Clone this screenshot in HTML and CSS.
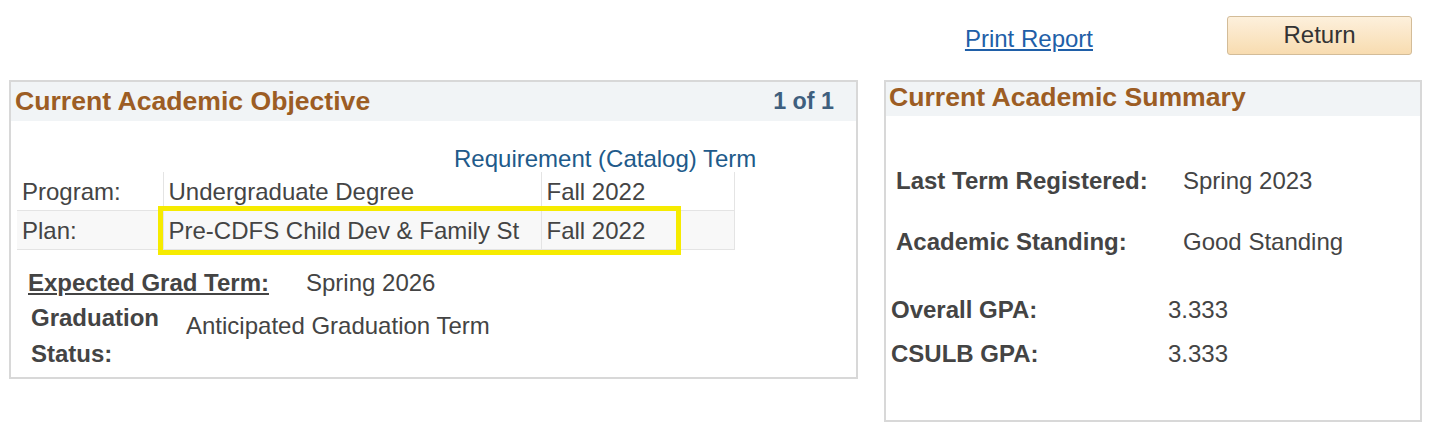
FILE: index.html
```html
<!DOCTYPE html>
<html>
  <head>
    <meta charset="utf-8">
    <title>Academic Progress</title>
    <link rel="stylesheet" href="styles.css">
  </head>
  <body>
    <div class="toolbar">
      <a class="print-link" href="#">Print Report</a>
      <button class="return-button">Return</button>
    </div>
    <div class="container">
      <div class="panel objective">
        <div class="panel-header">
          <h2>Current Academic Objective</h2>
          <span class="count">1 of 1</span>
        </div>
        <div class="req-title">Requirement (Catalog) Term</div>
        <table class="plan-table">
          <tr>
            <td class="col-label">Program:</td>
            <td class="col-name">Undergraduate Degree</td>
            <td class="col-term">Fall 2022</td>
          </tr>
          <tr class="alt">
            <td class="col-label">Plan:</td>
            <td class="col-name">Pre-CDFS Child Dev &amp; Family St</td>
            <td class="col-term">Fall 2022</td>
          </tr>
        </table>
        <div class="highlight"></div>
        <div class="grad-term">
          <span class="grad-label">Expected Grad Term:</span>
          <span class="grad-value">Spring 2026</span>
        </div>
        <div class="grad-status">
          <span class="status-label">Graduation<br>Status:</span>
          <span class="status-value">Anticipated Graduation Term</span>
        </div>
      </div>
      <div class="panel summary">
        <div class="panel-header">
          <h2>Current Academic Summary</h2>
        </div>
        <div class="summary-row first">
          <span class="sum-label">Last Term Registered:</span>
          <span class="sum-value">Spring 2023</span>
        </div>
        <div class="summary-row">
          <span class="sum-label">Academic Standing:</span>
          <span class="sum-value">Good Standing</span>
        </div>
        <div class="gpa-row first">
          <span class="gpa-label">Overall GPA:</span>
          <span class="gpa-value">3.333</span>
        </div>
        <div class="gpa-row">
          <span class="gpa-label">CSULB GPA:</span>
          <span class="gpa-value">3.333</span>
        </div>
      </div>
    </div>
  </body>
</html>
```

FILE: styles.css
```css
* {
  box-sizing: border-box;
}

body {
  font-family: Arial, "Liberation Sans", sans-serif;
  margin: 0;
  padding: 0;
  background-color: #fff;
  color: #444;
  font-size: 24px;
}

.toolbar {
  display: flex;
  justify-content: flex-end;
  align-items: center;
  height: 80px;
  padding: 0 19px 8px 0;
}

.print-link {
  color: #1f5fa8;
  font-size: 24px;
  margin-right: 134px;
  margin-top: 6px;
}

.return-button {
  width: 185px;
  height: 39px;
  font-family: inherit;
  font-size: 24px;
  color: #333;
  background: linear-gradient(#fdf0dc, #f8dcb0);
  border: 1px solid #d3bc98;
  border-radius: 3px;
  margin-top: -2px;
  padding: 0;
}

.container {
  display: flex;
  align-items: flex-start;
  padding: 0 9px;
  gap: 26px;
}

.panel {
  border: 2px solid #d8d8d8;
  background-color: #fff;
}

.objective {
  position: relative;
  width: 849px;
  height: 299px;
}

.summary {
  width: 538px;
  height: 342px;
}

.panel-header {
  display: flex;
  justify-content: space-between;
  align-items: center;
  background-color: #f1f4f6;
  height: 39px;
  padding: 0 22px 0 4px;
}

.summary .panel-header {
  height: 34px;
  padding: 0 0 3px 3px;
}

.panel-header h2 {
  font-size: 26.6px;
  font-weight: bold;
  color: #9c5d24;
  margin: 0;
}

.count {
  font-size: 23.3px;
  font-weight: bold;
  color: #3f5f7e;
}

.req-title {
  color: #215a8a;
  margin: 24px 0 0 443px;
  height: 27px;
}

.plan-table {
  border-collapse: collapse;
  margin-left: 6px;
}

.plan-table td {
  border: 1px solid #e4e4e4;
  border-top: none;
  border-left: none;
  height: 38px;
  padding: 3px 6px 0 5px;
  vertical-align: middle;
}

.plan-table .col-label {
  width: 146px;
}

.plan-table .col-name {
  width: 378px;
}

.plan-table .col-term {
  width: 193px;
}

.plan-table tr.alt td {
  background-color: #f8f8f8;
  height: 39px;
}

/* annotation box drawn over the plan row */
.highlight {
  position: absolute;
  left: 147px;
  top: 124px;
  width: 523px;
  height: 49px;
  border: 5px solid #f6eb00;
}

.grad-term {
  display: flex;
  margin: 19px 0 0 17px;
  height: 31px;
}

.grad-label {
  font-weight: bold;
  text-decoration: underline;
  width: 278px;
}

.grad-status {
  display: flex;
  margin-left: 20px;
}

.status-label {
  font-weight: bold;
  line-height: 36px;
  width: 155px;
}

.status-value {
  margin-top: 12px;
}

.summary-row {
  display: flex;
  margin-left: 10px;
  height: 61px;
}

.summary-row.first {
  margin-top: 51px;
}

.sum-label {
  font-weight: bold;
  width: 287px;
}

.gpa-row {
  display: flex;
  margin-left: 5px;
  height: 44px;
}

.gpa-row.first {
  margin-top: 7px;
}

.gpa-label {
  font-weight: bold;
  width: 277px;
}
```
